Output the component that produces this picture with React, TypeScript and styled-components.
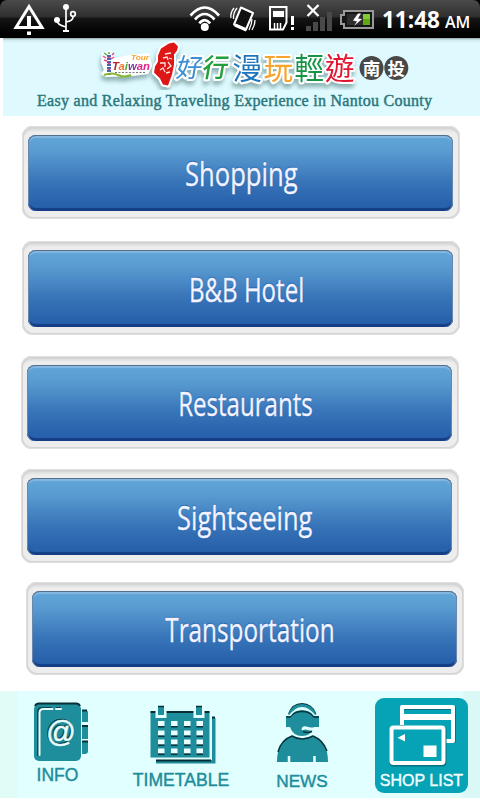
import styled, { createGlobalStyle } from 'styled-components';

const GlobalStyle = createGlobalStyle`
  * {
    box-sizing: border-box;
  }

  body {
    margin: 0;
    background: #fff;
    font-family: 'Open Sans', 'Noto Sans', sans-serif;
  }
`;

const Screen = styled.div`
  width: 480px;
  height: 800px;
  display: flex;
  flex-direction: column;
  background: #fff;
  overflow: hidden;
`;

/* ---------- status bar ---------- */

const StatusBack = styled.div`
  height: 38px;
  flex: none;
  background: #000;
`;

const StatusBar = styled.div`
  height: 38px;
  display: flex;
  align-items: flex-start;
  border-radius: 7px 7px 0 0;
  background: linear-gradient(#4b4b4b 0, #2e2e2e 17px, #161616 18px, #000 34px);
`;

const StatusIcon = styled.svg<{ $gap?: number }>`
  flex: none;
  height: 38px;
  margin-left: ${props => props.$gap ?? 0}px;
`;

const Clock = styled.div`
  display: flex;
  align-items: baseline;
  gap: 5px;
  margin-left: 7px;
  color: #fff;
  font-size: 22.5px;
  font-weight: 700;
  line-height: 39px;
  white-space: nowrap;
`;

const Meridiem = styled.span`
  font-size: 16px;
  font-weight: 600;
`;

/* ---------- header ---------- */

const Header = styled.header`
  flex: none;
  height: 78px;
  margin-left: 3px;
  display: flex;
  flex-direction: column;
  background: linear-gradient(#8fa3a6 0, #cfeaee 2px, #defaff 5px);
`;

const Logo = styled.svg`
  flex: none;
  width: 477px;
  height: 52px;
`;

const Tagline = styled.div`
  padding: 1px 0 0 34px;
  color: #2b777c;
  font-family: 'Liberation Serif', serif;
  font-size: 16px;
  line-height: 20px;
  letter-spacing: 0.28px;
  white-space: nowrap;
  -webkit-text-stroke: 0.45px #2b777c;
`;

/* ---------- menu ---------- */

const Menu = styled.main`
  flex: none;
  height: 575px;
  padding-top: 10px;
`;

const MenuFrame = styled.div<{ $left: number; $height: number; $gap: number }>`
  width: 438px;
  height: ${props => props.$height}px;
  margin: 0 0 ${props => props.$gap}px ${props => props.$left}px;
  padding: 9px 7px 8px 6px;
  border-radius: 11px;
  background: #ededed;
  box-shadow:
    inset 0 0 0 1px #dedfde,
    inset 0 0 0 2px #d2d3d2,
    inset 0 3px 1px #d4d4d4,
    inset 0 5px 1px #e2e2e2;
`;

const MenuButton = styled.button`
  display: flex;
  justify-content: center;
  align-items: center;
  width: 100%;
  height: 100%;
  padding: 2px 0 0;
  border: 0;
  border-radius: 8px;
  color: #f4f3ff;
  background: linear-gradient(#61a5d8 0, #5a9dd2 20%, #3874b8 62%, #2862ac 90%);
  box-shadow:
    inset 0 1px 0 #55708f,
    inset 1px 0 0 #6c87ac,
    inset -1px 0 0 #6c87ac,
    inset 0 3px 1px #85b7e0,
    inset 0 -3px 1px #143d86;
`;

const MenuLabel = styled.span<{ $scale: number; $shift: number }>`
  display: inline-block;
  font-family: 'Open Sans', sans-serif;
  font-size: 32px;
  font-weight: 400;
  line-height: 40px;
  white-space: nowrap;
  text-shadow: 0 -1px 1px #1c5fae;
  -webkit-text-stroke: 0.3px #f4f3ff;
  transform: translateX(${props => props.$shift}px) scaleX(${props => props.$scale});
`;

/* ---------- tab bar ---------- */

const TabBar = styled.nav`
  flex: none;
  height: 107px;
  display: grid;
  grid-template-columns: 120px 122px 120px 118px;
  background: linear-gradient(90deg, #e1fcf6 0, #e1fcf6 17px, #e1ffff 18px, #e1ffff 462px, #daf8f5 464px);
`;

const Tab = styled.div`
  display: flex;
  flex-direction: column;
  align-items: center;
`;

const ActiveTab = styled(Tab)`
  width: 93px;
  height: 95px;
  margin: 7px 0 0 13px;
  border-radius: 9px;
  background: #06a2b5;
`;

const TabIcon = styled.svg`
  flex: none;
  display: block;
`;

const TabLabel = styled.span<{ $size: number; $top?: number; $shift?: number; $active?: boolean }>`
  margin-top: ${props => props.$top ?? 0}px;
  padding-right: ${props => props.$shift ?? 0}px;
  color: ${props => (props.$active ? '#f2ffff' : '#208c9b')};
  font-family: 'Liberation Sans', Arial, sans-serif;
  font-size: ${props => props.$size}px;
  line-height: 20px;
  white-space: nowrap;
  -webkit-text-stroke: 0.4px ${props => (props.$active ? '#f2ffff' : '#208c9b')};
`;

interface MenuEntry {
  label: string;
  left: number;
  height: number;
  gap: number;
  scale: number;
  shift: number;
}

const menu: MenuEntry[] = [
  { label: 'Shopping', left: 22, height: 93, gap: 22, scale: 0.8, shift: 1 },
  { label: 'B&B Hotel', left: 22, height: 94, gap: 21, scale: 0.752, shift: 6 },
  { label: 'Restaurants', left: 21, height: 93, gap: 20, scale: 0.752, shift: 6 },
  { label: 'Sightseeing', left: 21, height: 94, gap: 19, scale: 0.794, shift: 5.5 },
  { label: 'Transportation', left: 26, height: 93, gap: 0, scale: 0.76, shift: 5.5 },
];

const cjk = "'Noto Sans CJK TC', sans-serif";

const titleChars = [
  { char: '漫', x: 232.5, color: '#1f75bd' },
  { char: '玩', x: 263.5, color: '#f6a42f' },
  { char: '輕', x: 294.5, color: '#159447' },
  { char: '遊', x: 325, color: '#e2142f' },
];

function StatusIcons() {
  return (
    <>
      <StatusIcon $gap={12} width="34" viewBox="12 0 34 38">
        <path d="M27 27.500H16L29 6.500L42 27.500H31" fill="none" stroke="#fff" strokeWidth="3" />
        <path d="M27 16h4v13h-4zM27 31.500h4v3.500h-4z" fill="#fff" />
      </StatusIcon>
      <StatusIcon $gap={7} width="25" viewBox="53 0 25 38">
        <g fill="none" stroke="#fff" strokeWidth="1.700">
          <path d="M66 6V31M57 20q0 5 9 7M73 17q0 4-7 5" />
          <circle cx="73" cy="14" r="2.300" />
        </g>
        <circle cx="66" cy="7" r="3" fill="#fff" />
        <circle cx="57" cy="20" r="3" fill="#fff" />
        <path d="M63 30h6v2h-6z" fill="#fff" />
      </StatusIcon>
      <StatusIcon $gap={110} width="34" viewBox="188 0 34 38">
        <g fill="none" stroke="#fff" strokeWidth="2.700">
          <path d="M190.500 15.500Q204.700 -0.500 219 15.500" />
          <path d="M195 19.500Q204.700 8.500 214.500 19.500" />
          <path d="M199.300 23.300Q204.700 17 210.200 23.300" />
        </g>
        <circle cx="204.800" cy="27" r="4" fill="#fff" />
      </StatusIcon>
      <StatusIcon $gap={7} width="29" viewBox="229 0 29 38">
        <path d="M241 7.500L253 13L246 29.500L234 24.500Z" fill="#111" stroke="#fff" strokeWidth="2" strokeLinejoin="round" />
        <path d="M235 25L246.500 30" stroke="#fff" strokeWidth="3.500" />
        <path d="M234 8q-4 5-3 10M237 8q-4 5-3.500 11M252 19q0 5-3 11M255 20q0 5-3 10" fill="none" stroke="#fff" strokeWidth="1.300" />
      </StatusIcon>
      <StatusIcon $gap={10} width="28" viewBox="268 0 28 38">
        <path d="M270 7h16.500v15.500l-3.500 7h-13z" fill="none" stroke="#fff" strokeWidth="2" />
        <path d="M273 11h11v6h-11z" fill="#fff" />
        <path d="M274.500 23v6M277.500 23v6M280.500 23v6" stroke="#fff" strokeWidth="1.500" />
        <path d="M291 16h3v9h-3zM291 27h3v3h-3z" fill="#fff" />
      </StatusIcon>
      <StatusIcon $gap={9} width="28" viewBox="305 0 28 38">
        <path d="M306 26h5v5h-5zM313 22h5v9h-5zM320 17h5v14h-5zM327 12h5v19h-5z" fill="#494949" />
        <path d="M307.500 5l11 11M318.500 5l-11 11" stroke="#fff" strokeWidth="2.300" />
      </StatusIcon>
      <StatusIcon $gap={7} width="35" viewBox="340 0 35 38">
        <path d="M344 11h29v17h-29v-4h-3v-9h3z" fill="#151515" stroke="#999" strokeWidth="2" />
        <path d="M347 14h17v11h-17z" fill="#2d2d2d" />
        <path d="M363 14h7v11h-7z" fill="#5eaa10" />
        <path d="M363 14h7v5h-7z" fill="#82c936" />
        <path d="M358 13.500l-5 7 4 1-3 4.500 8-7-4-.5 3-5z" fill="#fff" />
      </StatusIcon>
    </>
  );
}

function HeaderLogo() {
  return (
    <Logo viewBox="3 38 477 52">
      <defs>
        <filter id="lift" x="-10%" y="-20%" width="120%" height="150%">
          <feDropShadow dx="-1" dy="4" stdDeviation="2.200" floodColor="#4d7476" floodOpacity="0.550" />
        </filter>
      </defs>
      <g filter="url(#lift)">
        {/* tour taiwan badge */}
        <path d="M102 53l8-3 5 8 14-3 20-2 3 13-4 8-16 2-26 1-5-3 3-4-3-8z" fill="#fff" />
        <g fontFamily="'Liberation Sans', sans-serif" fontWeight="700" fontStyle="italic">
          <text x="131" y="59.500" fontSize="8" fill="#f5a12a" textLength="18" lengthAdjust="spacingAndGlyphs">Tour</text>
          <text x="112" y="70" fontSize="11.500" textLength="38" lengthAdjust="spacingAndGlyphs">
            <tspan fill="#b3272e">T</tspan>
            <tspan fill="#ed7526">a</tspan>
            <tspan fill="#49a943">i</tspan>
            <tspan fill="#7b3d9b">w</tspan>
            <tspan fill="#df2389">an</tspan>
          </text>
        </g>
        <path d="M109 55v20" stroke="#4d64b0" strokeWidth="4" strokeDasharray="2 1" />
        <path d="M109 57v18" stroke="#e5478f" strokeWidth="3" strokeDasharray="1 5" />
        <path d="M103 56l3 2M104 60l3 1M112 55l2-2M111 59l3-2" stroke="#e5478f" strokeWidth="1.500" />
        <path d="M104 53l3 2M109 52v2" stroke="#43ae60" strokeWidth="1.500" />
        <path d="M104 75q8-3 14 0t13 0" fill="none" stroke="#87b833" strokeWidth="2" />
        <path d="M115 72.500h31" stroke="#777" strokeWidth="1" strokeDasharray="2 1.500" />

        {/* island */}
        <path
          d="M169 43.500l5-1 4 4-1 4-3 4 0 10-2 10-4 11-5-1-3-6-6-6 1-6 3-5 0-6 3-7z"
          fill="#de1519"
          stroke="#fff"
          strokeWidth="4"
          strokeLinejoin="round"
          paintOrder="stroke"
        />
        <path
          d="M165 54l6-1M163 58l4-1 1 3M169 58l3 1M160 63l5 0 0 4M168 62l3 4-4 3M160 70l3-2 2 4M166 73l4-1"
          fill="none"
          stroke="#ffe3dd"
          strokeWidth="1.300"
        />

        <g fontFamily={cjk} stroke="#fff" strokeWidth="4" strokeLinejoin="round" paintOrder="stroke">
          <text fontSize="26" fontWeight="400" fill="#3d8fd4" transform="translate(175 77) skewX(-10)">好</text>
          <text fontSize="26" fontWeight="500" fill="#23a03c" transform="translate(201 77) skewX(-10)">行</text>
          {titleChars.map(item => (
            <text key={item.char} x={item.x} y="78.500" fontSize="29.500" fontWeight="400" fill={item.color}>
              {item.char}
            </text>
          ))}
        </g>
      </g>
      <circle cx="371.500" cy="68" r="12" fill="#484848" />
      <circle cx="396.300" cy="68" r="12" fill="#484848" />
      <g fontFamily={cjk} fontSize="17.500" fontWeight="700" fill="#fff" textAnchor="middle">
        <text x="371.500" y="74.500">南</text>
        <text x="396.300" y="74.500">投</text>
      </g>
    </Logo>
  );
}

function InfoIcon() {
  return (
    <TabIcon width="120" height="74" viewBox="0 691 120 74">
      <g fill="#1f8e9c">
        <path d="M82 710h3.500q2.500 0 2.500 2.500v9.500h-6zM82 726h6v13h-6zM82 742h6v9q0 3-3 3h-3z" />
        <rect x="34" y="704" width="47" height="57" rx="5" />
      </g>
      <path d="M35 706q1-2.500 4-2.500h37q3 0 4 2.500M82 710.500h5M82 726h6M82 741.500h6" fill="none" stroke="#062f37" strokeWidth="1.800" />
      <path d="M38 756V712q0-4 4-4h10M56 708h5" fill="none" stroke="#0a4851" strokeWidth="2" />
      <path d="M39.500 755V713q0-4 4-4h9M56 709h5" fill="none" stroke="#e8ffff" strokeWidth="2" strokeLinecap="round" />
      <g fontFamily="'Liberation Sans', sans-serif" fontSize="29" textAnchor="middle">
        <text x="60" y="741" fill="#063f48" stroke="#063f48" strokeWidth="0.500">@</text>
        <text x="61" y="742" fill="#edffff" stroke="#edffff" strokeWidth="0.500">@</text>
      </g>
    </TabIcon>
  );
}

function CalendarIcon() {
  const cols = [158, 171, 184, 196.500];
  const rows = [721, 730.5, 739.5, 748.5];
  return (
    <TabIcon width="122" height="77" viewBox="120 691 122 77">
      <path d="M212 718h3.500v45.500H156V760h56z" fill="#1f8e9c" />
      <path d="M212 717.500h3M156 760.500h55" stroke="#052e35" strokeWidth="1.800" />
      <path d="M150.500 711.500h59v46h-59z" fill="#1f8e9c" />
      <path d="M150.500 712h59" stroke="#052e35" strokeWidth="2" />
      <path d="M155.500 706h11v12h-11zM193.500 706h11v12h-11z" fill="#e1ffff" />
      <path d="M158 706h6v9h-6zM196 706h6v9h-6z" fill="#1f8e9c" />
      <path d="M158 706.500h6M196 706.500h6" stroke="#052e35" strokeWidth="1.700" />
      {rows.map(y =>
        cols.map(x => (
          <g key={`${x}-${y}`}>
            <rect x={x} y={y} width="6.500" height="5" fill="#eaffff" />
            <rect x={x} y={y + 5} width="6.500" height="1.500" fill="#06333b" />
          </g>
        ))
      )}
    </TabIcon>
  );
}

function OperatorIcon() {
  return (
    <TabIcon width="120" height="78" viewBox="242 691 120 78">
      <path d="M289 714Q292.500 704 302 704T315.500 714" fill="none" stroke="#06343c" strokeWidth="2" />
      <path d="M289.500 715Q293 705.500 302 705.500T315 715" fill="none" stroke="#1f8e9c" strokeWidth="3" />
      <path d="M290 716q3-6 12-6t13 6h4v11h-5q-3 9-12 9t-12-9h-4v-11z" fill="#1f8e9c" />
      <path d="M286 717h4q4-5.500 12-5.500t12 5.500h5" fill="none" stroke="#06343c" strokeWidth="1.300" />
      <path d="M290 715.500q4-6.500 12-6.500t12.500 6.500" fill="none" stroke="#e1ffff" strokeWidth="1.700" />
      <path d="M303 730q0-3 3-2l4 1h9" fill="none" stroke="#e8ffff" strokeWidth="3" />
      <path d="M303 731.500q4 2 9 0" fill="none" stroke="#06343c" strokeWidth="1.500" />
      <path d="M277 762q0-21 15-26 10 6 21 0 15 5 15 26z" fill="#1f8e9c" />
      <path d="M278 752q3-12 14-16 10 6 21 0 10 4 14 15" fill="none" stroke="#06343c" strokeWidth="1.500" />
      <path d="M289 756v6M314.500 756v6" stroke="#eaffff" strokeWidth="2.500" />
    </TabIcon>
  );
}

function CardsIcon() {
  return (
    <TabIcon width="93" height="73" viewBox="375 698 93 73">
      <g fill="none" strokeLinejoin="round">
        <path d="M401 725v-18h52v33h-8" stroke="#08717e" strokeWidth="4" transform="translate(1 1)" />
        <path d="M402 725v-18h51v34h-8" stroke="#fff" strokeWidth="4" />
        <path d="M402 717h51" stroke="#fff" strokeWidth="6" />
        <rect x="391.500" y="728.500" width="53" height="36" rx="2" stroke="#08717e" strokeWidth="4" />
        <rect x="391.500" y="727.500" width="52" height="35.500" rx="2" fill="#06a2b5" stroke="#fff" strokeWidth="4" />
      </g>
      <path d="M405 734v7.500l-7.500-3.800zM423.500 745.500h13V757h-13z" fill="#fff" />
    </TabIcon>
  );
}

function App() {
  return (
    <Screen>
      <GlobalStyle />
      <StatusBack>
        <StatusBar>
          <StatusIcons />
          <Clock>
            11:48 <Meridiem>AM</Meridiem>
          </Clock>
        </StatusBar>
      </StatusBack>

      <Header>
        <HeaderLogo />
        <Tagline>Easy and Relaxing Traveling Experience in Nantou County</Tagline>
      </Header>

      <Menu>
        {menu.map(item => (
          <MenuFrame key={item.label} $left={item.left} $height={item.height} $gap={item.gap}>
            <MenuButton>
              <MenuLabel $scale={item.scale} $shift={item.shift}>
                {item.label}
              </MenuLabel>
            </MenuButton>
          </MenuFrame>
        ))}
      </Menu>

      <TabBar>
        <Tab>
          <InfoIcon />
          <TabLabel $size={17.5} $shift={5}>INFO</TabLabel>
        </Tab>
        <Tab>
          <CalendarIcon />
          <TabLabel $size={17.6} $top={2}>TIMETABLE</TabLabel>
        </Tab>
        <Tab>
          <OperatorIcon />
          <TabLabel $size={17.2} $top={2}>NEWS</TabLabel>
        </Tab>
        <ActiveTab>
          <CardsIcon />
          <TabLabel $size={16} $active>SHOP LIST</TabLabel>
        </ActiveTab>
      </TabBar>
    </Screen>
  );
}

export default App;
